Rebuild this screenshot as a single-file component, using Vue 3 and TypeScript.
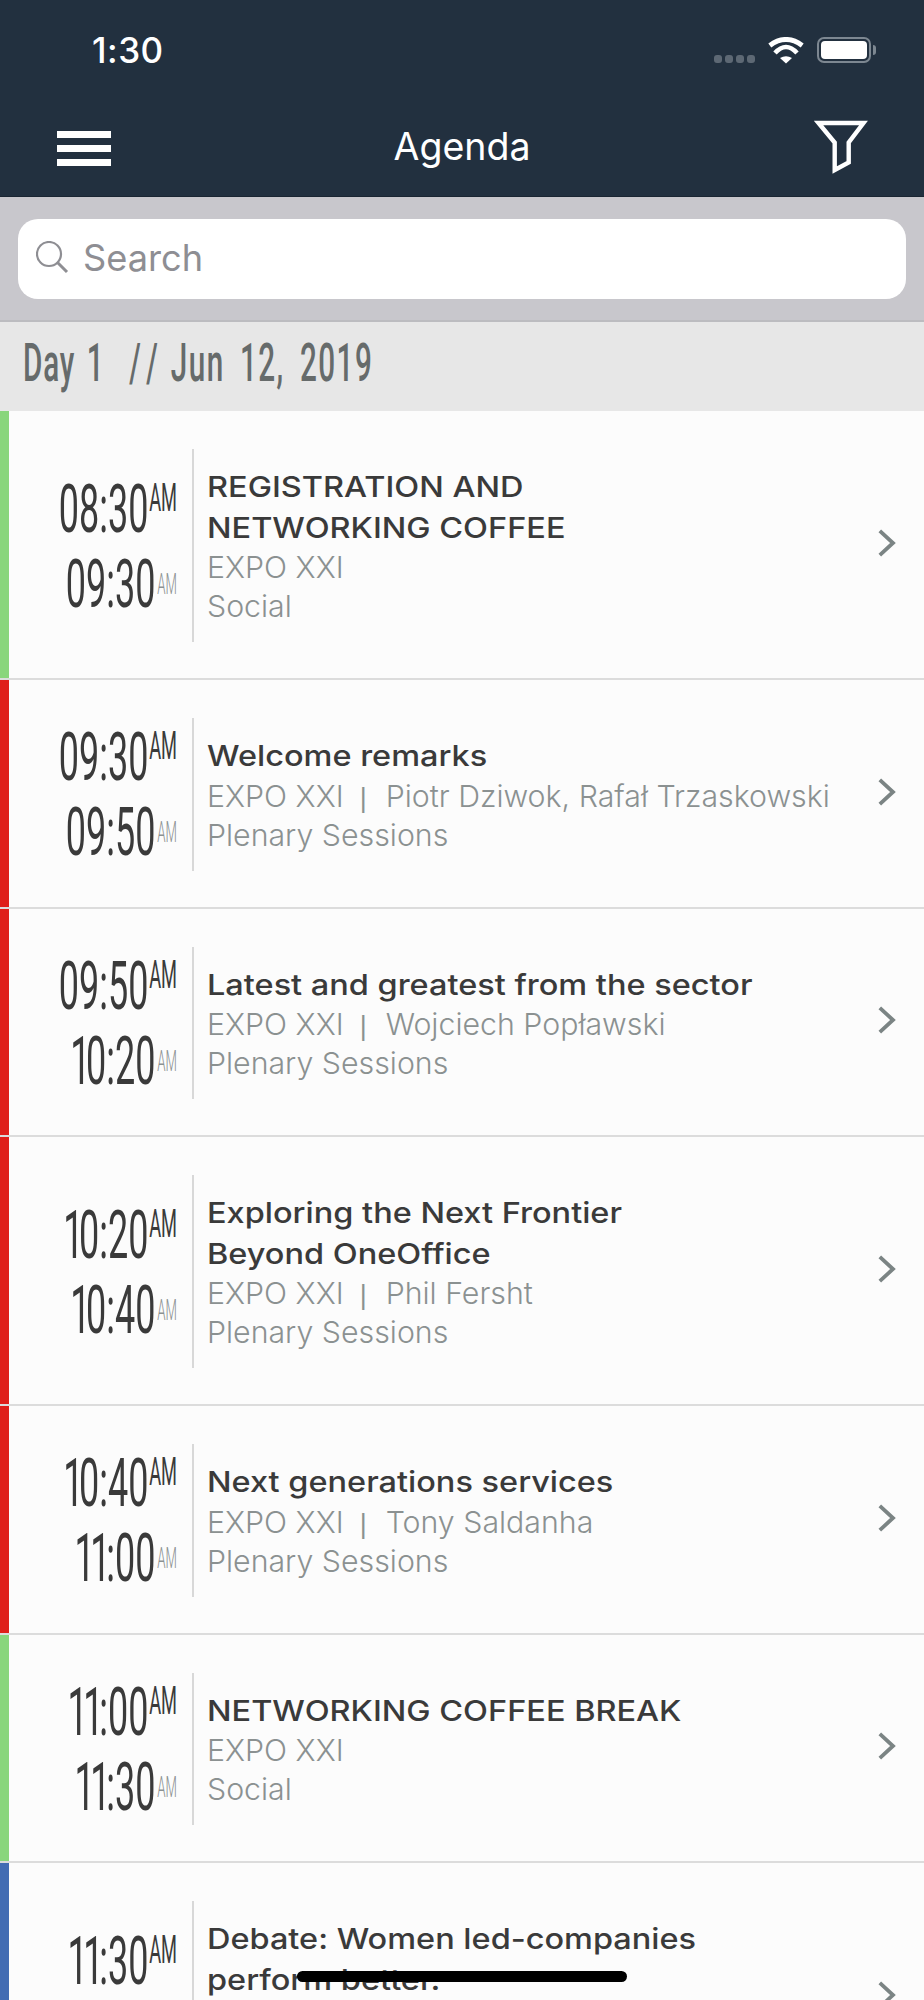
<script setup lang="ts">
interface Session {
  start: string;
  end: string;
  title: string[];
  place: string;
  speaker?: string;
  track: string;
  color: string;
}

const sessions: Session[] = [
  { start: '08:30', end: '09:30', title: ['REGISTRATION AND', 'NETWORKING COFFEE'], place: 'EXPO XXI', track: 'Social', color: '#89d67c' },
  { start: '09:30', end: '09:50', title: ['Welcome remarks'], place: 'EXPO XXI', speaker: 'Piotr Dziwok, Rafał Trzaskowski', track: 'Plenary Sessions', color: '#df1f1a' },
  { start: '09:50', end: '10:20', title: ['Latest and greatest from the sector'], place: 'EXPO XXI', speaker: 'Wojciech Popławski', track: 'Plenary Sessions', color: '#df1f1a' },
  { start: '10:20', end: '10:40', title: ['Exploring the Next Frontier', 'Beyond OneOffice'], place: 'EXPO XXI', speaker: 'Phil Fersht', track: 'Plenary Sessions', color: '#df1f1a' },
  { start: '10:40', end: '11:00', title: ['Next generations services'], place: 'EXPO XXI', speaker: 'Tony Saldanha', track: 'Plenary Sessions', color: '#df1f1a' },
  { start: '11:00', end: '11:30', title: ['NETWORKING COFFEE BREAK'], place: 'EXPO XXI', track: 'Social', color: '#89d67c' },
  { start: '11:30', end: '12:00', title: ['Debate: Women led-companies', 'perform better.'], place: 'EXPO XXI', track: 'Debate', color: '#426cb3' },
];
</script>

<template>
  <div class="screen">
    <header class="topbar">
      <div class="status">
        <span class="clock-now">1:30</span>
        <div class="status-icons">
          <span class="dots"><i></i><i></i><i></i><i></i></span>
          <svg class="wifi" width="36" height="27" viewBox="0 0 36 27">
            <path d="M12 21Q18 17.500 24 21L18 26.500z" fill="#fff" />
            <path d="M7 16Q18 4 29 16" fill="none" stroke="#fff" stroke-width="4.600" />
            <path d="M1.800 8.400Q18-3.400 34.200 8.400" fill="none" stroke="#fff" stroke-width="5" />
          </svg>
          <span class="battery"><i></i></span>
        </div>
      </div>
      <div class="navbar">
        <span class="burger"><i></i><i></i><i></i></span>
        <span class="nav-title">Agenda</span>
        <svg class="filter" width="54" height="56" viewBox="0 0 54 56">
          <path d="M4.500 3H49.500L34.700 22.500V42.500L20.700 50V22.500z" fill="none" stroke="#fff" stroke-width="4.400" stroke-miterlimit="10" />
        </svg>
      </div>
    </header>

    <div class="search-zone">
      <div class="search-box">
        <svg class="lens" width="34" height="34" viewBox="0 0 34 34">
          <circle cx="13" cy="13" r="12" fill="none" stroke="#8e8e93" stroke-width="2.200" />
          <path d="M21.500 21.500l9.500 9.500" stroke="#8e8e93" stroke-width="3" fill="none" />
        </svg>
        <span class="search-text">Search</span>
      </div>
    </div>

    <div class="day-head">
      <span class="day-label">Day 1<span class="slashes">//</span><span class="day-date">Jun 12, 2019</span></span>
    </div>

    <div v-for="s in sessions" :key="s.start" class="row">
      <div class="bar" :style="{ background: s.color }"></div>
      <div class="times">
        <div class="time">
          <span class="digits"><span v-for="(c, i) in s.start" :key="i" :class="{ one: c === '1' }">{{ c }}</span></span><span class="ampm">AM</span>
        </div>
        <div class="time">
          <span class="digits"><span v-for="(c, i) in s.end" :key="i" :class="{ one: c === '1' }">{{ c }}</span></span><span class="ampm small">AM</span>
        </div>
      </div>
      <div class="info">
        <div v-for="line in s.title" :key="line" class="title">{{ line }}</div>
        <div class="sub">{{ s.place }}<template v-if="s.speaker"><span class="pipe">|</span>{{ s.speaker }}</template></div>
        <div class="sub">{{ s.track }}</div>
      </div>
      <svg class="chev" width="20" height="30" viewBox="0 0 20 30">
        <path d="M2.800 2.800L16 15 2.800 27.200" fill="none" stroke="#7b8484" stroke-width="3.800" />
      </svg>
    </div>

    <div class="home-bar"></div>
  </div>
</template>

<style>
html, body { margin: 0; background: #fff; }
</style>

<style scoped>
.screen {
  position: relative;
  width: 924px;
  height: 2000px;
  overflow: hidden;
  background: #fcfcfc;
  font-family: Inter, "Liberation Sans", sans-serif;
}
.topbar {
  height: 196px;
  background: #22303f;
  border-bottom: 1px solid #1a2532;
  color: #fff;
}
.status {
  height: 100px;
  display: flex;
  align-items: center;
  justify-content: space-between;
  padding: 0 53px 0 92px;
}
.clock-now {
  font-size: 35px;
  font-weight: 500;
  letter-spacing: 0.5px;
}
.status-icons {
  display: flex;
  align-items: center;
  gap: 13px;
}
.dots {
  display: flex;
  gap: 3px;
  margin-top: 18px;
}
.dots i {
  width: 8px;
  height: 8px;
  border-radius: 3px;
  background: #5d6874;
}
.battery {
  position: relative;
  box-sizing: border-box;
  width: 54px;
  height: 26px;
  padding: 2px;
  border: 2px solid #7d8791;
  border-radius: 7px;
}
.battery i {
  display: block;
  height: 100%;
  border-radius: 4px;
  background: #fff;
}
.battery::after {
  content: "";
  position: absolute;
  right: -7px;
  top: 6px;
  width: 3px;
  height: 10px;
  border-radius: 0 3px 3px 0;
  background: #7d8791;
}
.navbar {
  position: relative;
  height: 96px;
  display: flex;
  align-items: center;
  justify-content: space-between;
  padding: 0 56px 0 57px;
}
.burger {
  display: flex;
  flex-direction: column;
  gap: 7px;
}
.burger i {
  width: 54px;
  height: 7px;
  background: #fff;
}
.nav-title {
  position: absolute;
  left: 0;
  right: 0;
  top: 24px;
  text-align: center;
  font-size: 37.5px;
}
.search-zone {
  box-sizing: border-box;
  height: 125px;
  padding: 22px 18px 0;
  background: #c8c7cc;
  border-bottom: 2px solid #bcbcc0;
}
.search-box {
  height: 80px;
  display: flex;
  align-items: center;
  gap: 13px;
  padding-left: 18px;
  background: #fff;
  border-radius: 20px;
}
.lens {
  margin-top: -3px;
}
.search-text {
  margin-top: -3px;
  font-size: 36.2px;
  color: #8e8e93;
}
.day-head {
  box-sizing: border-box;
  height: 89px;
  display: flex;
  align-items: center;
  padding: 0 0 8px 23px;
  background: #e7e7e7;
}
.day-label {
  font-family: Roboto, "Liberation Sans", sans-serif;
  font-size: 53px;
  font-weight: 500;
  letter-spacing: 1.5px;
  word-spacing: 6px;
  color: #666b6b;
  white-space: nowrap;
  transform: scaleX(0.56);
  transform-origin: left center;
}
.slashes {
  margin-left: 44px;
  letter-spacing: 16px;
}
.day-date {
  margin-left: 7px;
  letter-spacing: 2.6px;
  word-spacing: 11.5px;
}
.row {
  display: flex;
  align-items: stretch;
  border-bottom: 2px solid #dcdcdc;
}
.bar {
  flex: none;
  width: 9px;
}
.times {
  flex: none;
  width: 168px;
  margin: 38px 0 36px;
  display: flex;
  flex-direction: column;
  justify-content: center;
}
.time {
  height: 75px;
  display: flex;
  justify-content: flex-end;
  align-items: center;
}
.digits {
  flex: none;
  margin: 2px 0 0 -77px;
  font-family: Roboto, "Liberation Sans", sans-serif;
  font-size: 66px;
  line-height: 75px;
  color: #3a3a3a;
  transform: scaleX(0.545);
  transform-origin: right center;
}
.one {
  letter-spacing: -8px;
}
.ampm {
  flex: none;
  width: 29px;
  align-self: flex-start;
  margin-top: 13px;
  text-align: right;
  font-family: Roboto, "Liberation Sans", sans-serif;
  font-size: 38px;
  line-height: 28px;
  color: #3a3a3a;
  white-space: nowrap;
  direction: rtl;
  transform: scaleX(0.48);
  transform-origin: right center;
}
.ampm.small {
  width: 22px;
  margin-top: 27px;
  font-size: 30px;
  font-weight: 300;
  line-height: 22px;
  color: #8b9191;
  transform: scaleX(0.44);
}
.info {
  flex: 1;
  min-width: 0;
  margin: 38px 0 36px 15px;
  padding: 18px 0 16px 13px;
  border-left: 2px solid #d8d8d8;
  display: flex;
  flex-direction: column;
  justify-content: center;
}
.title {
  font-size: 29px;
  font-weight: 500;
  line-height: 40.5px;
  color: #3a3a3a;
  white-space: nowrap;
  transform: scaleX(1.12);
  transform-origin: left center;
}
.sub {
  font-size: 30.3px;
  font-weight: 300;
  line-height: 39px;
  color: #8b9191;
  white-space: pre;
}
.pipe {
  margin: 0 19px 0 16px;
  font-family: "Liberation Sans", sans-serif;
  font-size: 27px;
  line-height: 0;
}
.chev {
  flex: none;
  align-self: center;
  margin: 0 27px 3px 16px;
}
.home-bar {
  position: absolute;
  left: 297px;
  top: 1971px;
  width: 330px;
  height: 11px;
  border-radius: 6px;
  background: #000;
}
</style>
